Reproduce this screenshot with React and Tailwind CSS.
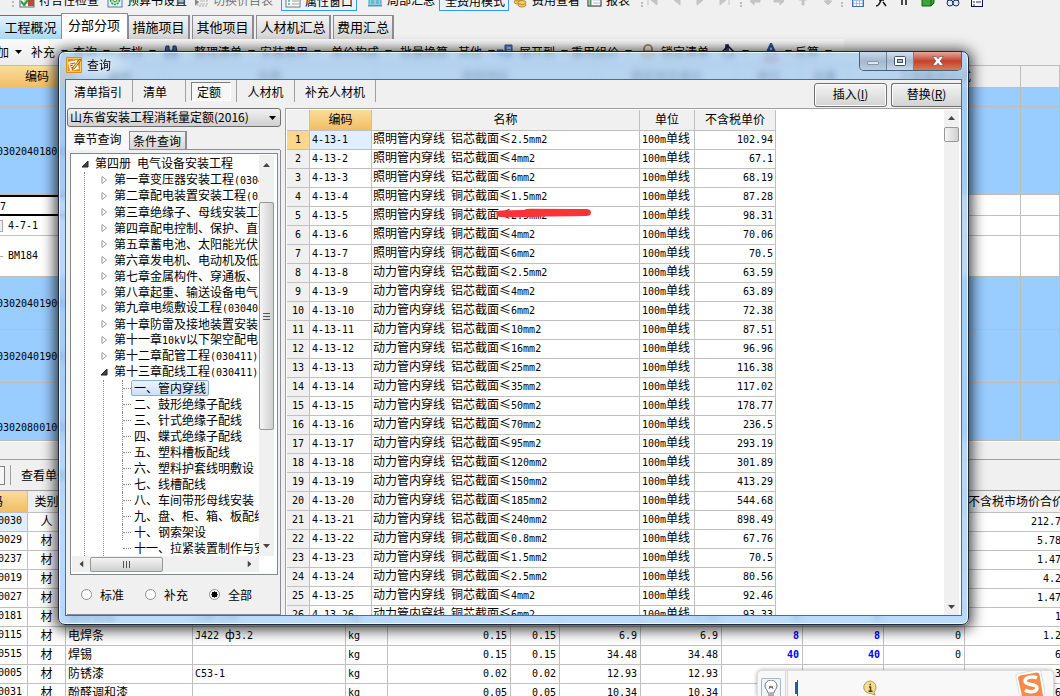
import React from "react";

const sans = "font-['Noto_Sans_CJK_SC',sans-serif]";

/* Latin runs sit on a half-width grid beside the full-width characters. */
function T({ children }) {
  const parts = String(children).split(/([\x20-\x7e]+)/).filter(Boolean);
  return (
    <>
      {parts.map((p, i) =>
        /^[\x20-\x7e]+$/.test(p) ? (
          <span key={i} className="whitespace-pre font-['DejaVu_Sans_Mono',monospace] text-[10px]">{p}</span>
        ) : (
          <React.Fragment key={i}>{p}</React.Fragment>
        )
      )}
    </>
  );
}

function Caret({ className = "" }) {
  return (
    <svg viewBox="0 0 7 4" className={"h-1 w-[7px] shrink-0 " + className} aria-hidden="true">
      <path d="M0 0h7L3.5 4z" fill="currentColor" />
    </svg>
  );
}

function Grip() {
  return <span className="h-3 w-[3px] shrink-0 border-l-2 border-dotted border-[#bdbdbd]" />;
}

/* ---------- top toolbar ---------- */

const GridCheck = () => (
  <svg viewBox="0 0 16 16" className="h-4 w-4" aria-hidden="true">
    <rect x="1" y="1" width="14" height="14" fill="#fff" stroke="#667" />
    <path d="M1 6h14M1 11h14M6 1v14M11 1v14" stroke="#8aa" />
    <rect x="9" y="8" width="6" height="6" fill="#b84a3a" />
    <path d="M2 9l3 4 7-9" fill="none" stroke="#2aa22a" strokeWidth="2" />
  </svg>
);
const Gear = () => (
  <svg viewBox="0 0 16 16" className="h-4 w-4" aria-hidden="true">
    <rect x="1" y="1" width="14" height="14" fill="#e6f0f8" stroke="#4d7fae" />
    <circle cx="8" cy="8" r="4.5" fill="#b9e8b9" stroke="#2e9c4a" strokeWidth="1.5" strokeDasharray="2 1" />
    <circle cx="8" cy="8" r="1.8" fill="#fff" stroke="#2e9c4a" />
  </svg>
);
const SwapGrid = () => (
  <svg viewBox="0 0 16 16" className="h-4 w-4" aria-hidden="true">
    <rect x="5" y="2" width="9" height="12" fill="#eee" stroke="#aaa" strokeDasharray="2 1" />
    <path d="M2 7l4 3-4 4z" fill="#888" />
    <path d="M7 6h5M7 9h5M7 12h5" stroke="#bbb" />
  </svg>
);
const Panel = () => (
  <svg viewBox="0 0 16 16" className="h-4 w-4" aria-hidden="true">
    <rect x="1" y="1" width="14" height="13" fill="#fff" stroke="#777" />
    <path d="M3 5h2M3 8h2M3 11h2" stroke="#4a8" strokeWidth="1.5" />
    <path d="M7 5h7M7 8h7M7 11h7" stroke="#999" />
  </svg>
);
const Chart = () => (
  <svg viewBox="0 0 16 16" className="h-4 w-4" aria-hidden="true">
    <path d="M2 12V6h3v6M6 12V3h4v9M11 12V7h3v5" fill="#8fd0e8" stroke="#3ca0c4" />
    <path d="M1 13.500h14" stroke="#3ca0c4" strokeWidth="2" />
  </svg>
);
const Coins = () => (
  <svg viewBox="0 0 16 16" className="h-4 w-4" aria-hidden="true">
    <g fill="#f2cf6b" stroke="#b78a2c">
      <ellipse cx="6" cy="10" rx="4" ry="2" />
      <ellipse cx="6" cy="7" rx="4" ry="2" />
      <ellipse cx="10" cy="13" rx="4" ry="2" />
      <ellipse cx="10" cy="10.500" rx="4" ry="2" />
    </g>
  </svg>
);
const Sheet = () => (
  <svg viewBox="0 0 16 16" className="h-4 w-4" aria-hidden="true">
    <rect x="2" y="1" width="13" height="13" fill="#fff" stroke="#222" />
    <path d="M4.500 2v12" stroke="#4a9a5a" strokeWidth="2" />
    <path d="M7 5h7M7 8h7M7 11h7" stroke="#abc" />
  </svg>
);

function TopItem({ icon, label, muted, w }) {
  return (
    <button type="button" className={"flex h-[15px] shrink-0 items-center gap-[4px] whitespace-nowrap leading-[14px] " + w + (muted ? " text-[#777]" : "")}>
      {icon}
      {label}
    </button>
  );
}

function Nav({ d, color = "#c4c4c4", w = "w-[37px]" }) {
  return (
    <span className={"flex shrink-0 justify-center " + w}>
      <svg viewBox="0 0 14 14" className="h-[14px] w-[14px] shrink-0" aria-hidden="true">
        <path d={d} fill={color} stroke={color} />
      </svg>
    </span>
  );
}

function TopToolbar() {
  return (
    <div className="flex h-[13px] shrink-0 items-end overflow-hidden pb-[6px] pl-3">
      <span className="w-[7px] shrink-0"><Grip /></span>
      <TopItem icon={<GridCheck />} label="符合性检查" w="w-[88px]" />
      <TopItem icon={<Gear />} label="预算书设置" w="w-[86px]" />
      <TopItem icon={<SwapGrid />} label="切换价目表" muted w="w-[88px]" />
      <span className="-mb-1 flex h-5 w-[76px] shrink-0 items-center border border-[#3399ff] bg-[#eaf3fd] pl-[3px]">
        <TopItem icon={<Panel />} label="属性窗口" w="w-[70px]" />
      </span>
      <span className="w-[10px] shrink-0" />
      <TopItem icon={<Chart />} label="局部汇总" w="w-[72px]" />
      <span className="-mb-1 flex h-5 w-[70px] shrink-0 items-center border border-[#3399ff] bg-[#eaf3fd] pl-[5px]">
        <TopItem label="全费用模式" w="w-[62px]" />
      </span>
      <span className="w-[3px] shrink-0" />
      <TopItem icon={<Coins />} label="费用查看" w="w-[74px]" />
      <TopItem icon={<Sheet />} label="报表" w="w-[55px]" />
      <Grip />
      <Nav d="M2 2v10M5 7l6-5v10z" w="w-[18px]" />
      <Nav d="M4 7l6-5v10z" w="w-[30px]" />
      <Nav d="M10 7L4 2v10z" w="w-[16px]" />
      <Nav d="M9 7L3 2v10zM12 2v10" w="w-[32px]" />
      <Grip />
      <Nav d="M2 8l4-4v3h6v2H6v3z" w="w-[24px]" />
      <Nav d="M12 8L8 4v3H2v2h6v3z" w="w-[24px]" />
      <Nav d="M7 3l4 4H8v5H6V7H3z" w="w-[24px]" />
      <Nav d="M7 12l4-4H8V3H6v5H3z" w="w-[26px]" />
      <Grip />
      <span className="flex shrink-0 items-end gap-[11px] pl-2">
        <svg viewBox="0 0 12 14" className="h-[14px] w-3" aria-hidden="true"><rect x=".5" y=".5" width="11" height="13" fill="#9fc0ea" stroke="#4a6ba6" /><path d="M2 6h8M2 9h8M2 12h8" stroke="#fff" strokeWidth="2" strokeDasharray="2 1" /></svg>
        <svg viewBox="0 0 12 14" className="h-[14px] w-3" aria-hidden="true"><path d="M1 13c3 0 4-3 5-6l2-4M4 7h5M8 9l3 4" stroke="#111" strokeWidth="1.500" fill="none" /></svg>
        <svg viewBox="0 0 12 14" className="h-[14px] w-3" aria-hidden="true"><path d="M4 2v10M8 2v10" stroke="#111" strokeWidth="1.500" /></svg>
        <svg viewBox="0 0 14 14" className="h-[14px] w-[14px]" aria-hidden="true"><path d="M1 5l3-3h9v8l-3 3H1z" fill="#3aa63a" stroke="#145c14" /><path d="M10 5v8" stroke="#145c14" /></svg>
        <svg viewBox="0 0 14 14" className="h-[14px] w-[14px]" aria-hidden="true"><path d="M3 2h3v6H1zM8 2h3l2 6H8z" fill="#2f4a86" /><circle cx="4" cy="10" r="3" fill="#dfe8f8" stroke="#1b2d5c" /><circle cx="10" cy="10" r="3" fill="#dfe8f8" stroke="#1b2d5c" /></svg>
        <svg viewBox="0 0 12 14" className="h-[14px] w-3" aria-hidden="true"><rect x=".5" y=".5" width="11" height="13" fill="#fff" stroke="#114" /><path d="M2 6h2M2 9h2M2 12h2M5 6h5M5 9h5" stroke="#22a" /></svg>
      </span>
    </div>
  );
}

/* ---------- main tabs ---------- */

function MainTabs() {
  const rest = [["措施项目", "w-[62px]"], ["其他项目", "w-[62px]"], ["人材机汇总", "w-[75px]"], ["费用汇总", "w-[61px]"]];
  return (
    <div role="tablist" className="flex h-[26px] shrink-0 items-end gap-[2px] text-[13px]">
      <button type="button" role="tab" className="-mr-[2px] h-6 w-[61px] whitespace-nowrap border-t border-[#3c7fb1] bg-linear-to-b from-[#e3f4fd] to-[#a6d9f5] pb-[2px] text-center">工程概况</button>
      <button type="button" role="tab" aria-selected="true" className="-mr-[2px] h-[26px] w-[67px] whitespace-nowrap border border-b-0 border-[#8c8c94] bg-white pb-1 pr-px text-center">分部分项</button>
      {rest.map(([label, w]) => (
        <button key={label} type="button" role="tab" className={"h-6 whitespace-nowrap border border-b-0 border-r-2 border-[#8c8c94] bg-linear-to-b from-[#f4f4f4] to-[#d4d4d4] pb-[2px] text-center " + w}>{label}</button>
      ))}
    </div>
  );
}

/* ---------- action toolbar ---------- */

function ActionBar() {
  const Item = ({ label, w, arrow = true, icon }) => (
    <button type="button" className={"flex shrink-0 items-center gap-[6px] whitespace-nowrap " + w}>
      {icon}
      {label}
      {arrow && <Caret />}
    </button>
  );
  return (
    <div className="flex h-[27px] shrink-0 items-center border-b border-[#bcbcbc]">
      <div className="flex h-full items-center bg-linear-to-b from-[#fafafa] to-[#ececec] pr-3">
        <span className="w-[31px] shrink-0 overflow-hidden"><span className="-ml-[15px] flex"><Item label="增加" w="w-[46px]" /></span></span>
        <Item label="补充" w="w-[42px]" />
        <Item label="查询" w="w-[46px]" />
        <Item label="存档" w="w-[45px]" />
        <span className="w-[30px] shrink-0">
          <svg viewBox="0 0 14 14" className="h-[14px] w-[14px]" aria-hidden="true"><path d="M2 1h3v3l1 2h2l1-2V1h3l1 6v6H9V8H5v5H1V7z" fill="#4667a8" stroke="#1f3768" /></svg>
        </span>
        <Item label="整理清单" w="w-[66px]" />
        <Item label="安装费用" w="w-[71px]" />
        <Item label="单价构成" w="w-[69px]" />
        <Item label="批量换算" w="w-[58px]" arrow={false} />
        <Item label="其他" w="w-[39px]" />
        <Item label="展开到" w="w-[74px]" icon={<svg viewBox="0 0 16 16" className="h-4 w-4 shrink-0" aria-hidden="true"><path d="M0 6h6v5H0zM8 1h7v12H8z" fill="#5a86cc" stroke="#2d4e91" /><path d="M10 4h4M10 7h4" stroke="#fff" /></svg>} />
        <Item label="重用组价" w="w-[70px]" />
        <Item label="锁定清单" w="w-[79px]" arrow={false} icon={<svg viewBox="0 0 14 16" className="h-4 w-[14px]" aria-hidden="true"><path d="M3 8V5a4 4 0 018 0v3" fill="none" stroke="#a09070" strokeWidth="2" /><rect x="1" y="7" width="12" height="8" rx="2" fill="#d9bf78" stroke="#a08a50" /></svg>} />
        <Item label="" w="w-[43px]" icon={<svg viewBox="0 0 16 16" className="h-4 w-4" aria-hidden="true"><path d="M2 8l6-6 6 6-6 6z" fill="#fff" stroke="#114" strokeWidth="1.500" /><path d="M6 8V1h2v6M13 8v6" stroke="#114" fill="none" strokeWidth="1.500" /></svg>} />
        <Item label="" w="w-[32px]" icon={<svg viewBox="0 0 16 18" className="h-[18px] w-4" aria-hidden="true"><path d="M3 12L8 1l5 11M5 8h6" stroke="#27549b" strokeWidth="2.500" fill="none" /><path d="M0 15h16v3H0z" fill="#e01010" /></svg>} />
        <Item label="反算" w="w-[37px]" />
      </div>
    </div>
  );
}

/* ---------- bill grid behind the dialog ---------- */

function BillGrid() {
  const heads = [["类别", "w-[90px]"], ["名称", "w-[210px]"], ["项目特征", "w-[221px]"], ["锁定综合单价", "w-[142px]"], ["单位", "w-[62px]"], ["含量", "w-[50px]"], ["工程量表达式", "w-[171px]"], ["", "w-auto"]];
  const rows = [
    ["", "h-[19px]", "blue"],
    ["030204018010", "h-[88px]", "blue"],
    ["7", "h-[21px]", "sel"],
    ["4-7-1", "h-[20px]", "sub"],
    ["BM184", "h-[41px]", "leaf"],
    ["030204019001", "h-[53px]", "blue"],
    ["030204019002", "h-[53px]", "blue"],
    ["030208001001", "h-[58px]", "low"],
  ];
  return (
    <table className="w-full table-fixed border-separate border-spacing-0">
      <thead>
        <tr className="h-[22px]">
          <th className="w-[75px] border-r border-[#c0c0c0] bg-linear-to-b from-[#fbdc9c] to-[#f1bd62] p-0 pb-[2px] font-normal leading-4">编码</th>
          {heads.map(([h, w], i) => (
            <th key={i} className={"border-b border-r border-[#c0c0c0] p-0 pb-[2px] font-normal leading-4 " + w}>{h}</th>
          ))}
        </tr>
      </thead>
      <tbody>
        {rows.map(([code, h, kind], i) => {
          const blue = kind === "blue" || kind === "low";
          const bg = blue ? "bg-[#99ccff] border-[#c4bcb4] " : "bg-white border-[#c0c0c0] ";
          return (
            <tr key={i} className={h}>
              <td className={"overflow-hidden whitespace-nowrap p-0 leading-[14px] " + bg + (kind === "sel" ? "border-y-2 border-black" : "border-b") + (kind === "low" ? " align-bottom" : "")}>
                {kind === "sub" ? (
                  <span className="flex items-center gap-[5px]"><span className="h-3 w-[3px] border border-l-0 border-[#aaa] bg-[#eee]" /><T>{code}</T></span>
                ) : kind === "leaf" ? (
                  <span className="flex items-center gap-[5px]"><span className="w-[3px] border-t border-[#aaa]" /><T>{code}</T></span>
                ) : kind === "sel" ? (
                  <T>{code}</T>
                ) : (
                  <span className={"-ml-[3px] block " + (kind === "low" ? "pb-[5px]" : "")}><T>{code}</T></span>
                )}
              </td>
              {heads.map((_, j) => (
                <td key={j} className={"border-b border-r p-0 " + bg} />
              ))}
            </tr>
          );
        })}
      </tbody>
    </table>
  );
}

/* ---------- resource grid at the bottom ---------- */

const resources = [
  ["0030", "人", "", "", "", "", "", "", "", "", "", "", "212.7 "],
  ["0029", "材", "", "", "", "", "", "", "", "", "", "", "5.78 "],
  ["0237", "材", "", "", "", "", "", "", "", "", "", "", "1.47 "],
  ["0019", "材", "", "", "", "", "", "", "", "", "", "", "4.2 "],
  ["0027", "材", "", "", "", "", "", "", "", "", "", "", "1.47 "],
  ["0181", "材", "镀锌铁丝", "13#~17#", "kg", "", "", "", "5.55", "8", "8", "", "1 "],
  ["0115", "材", "电焊条", "J422 ф3.2", "kg", "0.15", "0.15", "6.9", "6.9", "8", "8", "0", "1.2 "],
  ["0515", "材", "焊锡", "", "kg", "0.15", "0.15", "34.48", "34.48", "40", "40", "0", "6 "],
  ["0005", "材", "防锈漆", "C53-1", "kg", "0.02", "0.02", "12.93", "12.93", "", "", "", "3 "],
  ["0031", "材", "酚醛调和漆", "", "kg", "0.05", "0.05", "10.34", "10.34", "", "", "", "6 "],
];
const resCols = ["w-[28px]", "w-[38px]", "w-[127px]", "w-[153px]", "w-[42px]", "w-[123px]", "w-[49px]", "w-[81px]", "w-[81px]", "w-[81px]", "w-[81px]", "w-[81px]", "w-[103px]"];

function ResourceGrid() {
  return (
    <table className="w-[1068px] table-fixed border-separate border-spacing-0 bg-white">
      <thead>
        <tr className="h-[22px]">
          {resCols.map((w, i) => (
            <th key={i} className={"overflow-hidden whitespace-nowrap border-b border-r border-[#c0c0c0] p-0 pb-[2px] font-normal leading-4 " + w + (i === 0 ? " bg-linear-to-b from-[#fbdc9c] to-[#f1bd62]" : " bg-[#f0f0f0]")}>
              {i === 0 ? <span className="flex justify-end pr-[24px]">编码</span> : i === 1 ? "类别" : i === 12 ? "不含税市场价合价" : ""}
            </th>
          ))}
        </tr>
      </thead>
      <tbody>
        {resources.map((r, i) => (
          <tr key={i} className="h-[19px]">
            {r.map((v, j) => (
              <td
                key={j}
                className={
                  "overflow-hidden whitespace-nowrap border-b border-r border-[#c0c0c0] p-0 pb-[2px] leading-[14px] " +
                  (j === 0 ? "" : j === 1 ? "text-center" : j < 5 ? "pl-[2px]" : j === 12 ? "text-right" : "pr-[3px] text-right") +
                  (j === 9 || j === 10 ? " font-bold text-[#0000ff]" : "") +
                  (i === 0 && j === 0 ? " bg-[#dfefff]" : "")
                }
              >
                {j === 0 ? <span className="flex justify-end pr-[5px]"><T>{v}</T></span> : <T>{v}</T>}
              </td>
            ))}
          </tr>
        ))}
      </tbody>
    </table>
  );
}

/* ---------- query dialog ---------- */

function TitleBar() {
  return (
    <div className="flex h-[27px] shrink-0 items-center">
      <div className="flex h-full items-center gap-[5px] rounded-full bg-radial from-white/60 to-transparent to-70% pb-[2px] pl-[7px] pr-6">
        <svg viewBox="0 0 16 16" className="h-4 w-4" aria-hidden="true">
          <rect width="16" height="16" rx="1" fill="#e98a12" />
          <rect x="1.500" y="1.500" width="13" height="13" fill="none" stroke="#ffc860" />
          <path d="M2 5l9-2 2 9-9 2z" fill="#fffbe8" />
          <path d="M4 7l5-1M4 9l3-1M5 11l3-1" stroke="#b05a10" />
          <path d="M14 2L7 10l-1 3 3-2 6-8z" fill="#f7d774" stroke="#8a4a08" strokeWidth=".8" />
        </svg>
        <span className="leading-5">查询</span>
      </div>
      <div className="ml-auto mr-[6px] flex h-[19px] self-start overflow-hidden rounded-b-[5px] border border-t-0 border-[#4c5f78]">
        <button type="button" aria-label="最小化" className="flex w-[27px] items-center justify-center border-r border-[#6d8199] bg-linear-to-b from-[#c9d9e9] via-[#a3b9d0] to-[#b7cde2]">
          <span className="mt-1 h-1 w-3 rounded-[1px] border border-[#8795a6] bg-[#dfe6ee]" />
        </button>
        <button type="button" aria-label="最大化" className="flex w-[27px] items-center justify-center border-r border-[#6d8199] bg-linear-to-b from-[#d5e2ef] via-[#a3b9d0] to-[#c4d8ea]">
          <svg viewBox="0 0 12 10" className="h-[10px] w-3" aria-hidden="true"><rect x=".5" y=".5" width="11" height="9" rx="1" fill="#fff" stroke="#43506a" /><rect x="3.500" y="3.500" width="5" height="3" fill="#a8bcd4" stroke="#43506a" /></svg>
        </button>
        <button type="button" aria-label="关闭" className="flex w-[47px] items-center justify-center bg-linear-to-b from-[#e3a79c] via-[#c4402a] to-[#d67a5c]">
          <svg viewBox="0 0 12 10" className="h-[10px] w-3" aria-hidden="true"><path d="M.5.5h3.700L6 2.800 7.800.5h3.700L8.200 5l3.300 4.500H7.800L6 7.200 4.200 9.500H.5L3.800 5z" fill="#fff" stroke="#5a4450" strokeWidth=".6" /></svg>
        </button>
      </div>
    </div>
  );
}

function DialogTabs() {
  const tab = "border-r border-[#a0a0a0] h-[22px] text-center leading-[19px] ";
  return (
    <div className="flex h-[28px] shrink-0 items-center pl-px">
      <div role="tablist" className="flex items-center self-start">
        <button type="button" role="tab" className={tab + "w-[66px] pr-[3px]"}>清单指引</button>
        <button type="button" role="tab" className={tab + "mr-[5px] w-[53px] pr-2"}>清单</button>
        <button type="button" role="tab" aria-selected="true" className="h-[19px] w-10 border border-[#808080] border-b-white border-r-white bg-[#f7f7f7] pr-1 text-center leading-[17px]">定额</button>
        <span className="ml-[5px] h-[22px] border-l border-[#a0a0a0]" />
        <button type="button" role="tab" className={tab + "w-[58px]"}>人材机</button>
        <button type="button" role="tab" className={tab + "w-[81px]"}>补充人材机</button>
      </div>
      <div className="ml-auto flex gap-[4px] pt-[2px]">
        <button type="button" className="h-6 w-[73px] rounded-[3px] border border-[#707070] bg-linear-to-b from-[#f4f4f4] to-[#d3d3d3] pb-[2px] text-center leading-[18px] shadow-[inset_0_0_0_1px_#fcfcfc]">插入(<u>I</u>)</button>
        <button type="button" className="h-6 w-[70px] rounded-l-[3px] border border-r-0 border-[#707070] bg-linear-to-b from-[#f4f4f4] to-[#d3d3d3] pb-[2px] text-center leading-[18px] shadow-[inset_1px_1px_0_0_#fcfcfc]">替换(<u>R</u>)</button>
      </div>
    </div>
  );
}

const chapters = [
  "第一章变压器安装工程(030401)",
  "第二章配电装置安装工程(030402)",
  "第三章绝缘子、母线安装工程",
  "第四章配电控制、保护、直流",
  "第五章蓄电池、太阳能光伏",
  "第六章发电机、电动机及低压",
  "第七章金属构件、穿通板、",
  "第八章起重、输送设备电气",
  "第九章电缆敷设工程(030408)",
  "第十章防雷及接地装置安装",
  "第十一章10kV以下架空配电",
  "第十二章配管工程(030411)",
];
const sections = ["一、管内穿线", "二、鼓形绝缘子配线", "三、针式绝缘子配线", "四、蝶式绝缘子配线", "五、塑料槽板配线", "六、塑料护套线明敷设", "七、线槽配线", "八、车间带形母线安装", "九、盘、柜、箱、板配线", "十、钢索架设", "十一、拉紧装置制作与安装"];

const Open = () => (
  <svg viewBox="0 0 8 8" className="h-2 w-2 shrink-0" aria-hidden="true"><path d="M7 1v6H1z" fill="#444" stroke="#222" /></svg>
);
const Closed = () => (
  <svg viewBox="0 0 8 10" className="h-[10px] w-2 shrink-0" aria-hidden="true"><path d="M2 1.500v7L6.500 5z" fill="#fff" stroke="#999" /></svg>
);
const dot = "border-dotted border-[#888]";

function Tree() {
  return (
    <ul className="min-w-0 flex-1 overflow-hidden whitespace-nowrap pt-px">
      <li>
        <div className="flex h-4 items-center gap-[6px] pl-[9px] leading-4"><Open /><span><T>第四册 电气设备安装工程</T></span></div>
        <ul className={"ml-3 border-l " + dot}>
          {chapters.map((c) => (
            <li key={c} className="flex h-4 items-center gap-[6px] pl-[15px] leading-4"><Closed /><span><T>{c}</T></span></li>
          ))}
          <li>
            <div className="flex h-4 items-center gap-[6px] pl-[15px] leading-4"><Open /><span><T>第十三章配线工程(030411)</T></span></div>
            <ul className={"ml-[18px] border-l pl-[18px] " + dot}>
              {sections.map((s, i) => (
                <li key={s} className={"flex h-4 items-center leading-4 " + (i < 10 ? "border-l " + dot : "pl-px")}>
                  <span className={"w-2 shrink-0 border-t " + dot} />
                  <span className={"shrink-0 " + (i === 0 ? "rounded-[2px] border border-[#84acdd] bg-linear-to-b from-[#ebf4fd] to-[#c9e0fb] px-[2px] leading-[14px]" : "pl-[3px]")}>{s}</span>
                </li>
              ))}
            </ul>
          </li>
        </ul>
      </li>
    </ul>
  );
}

function ScrollUp() {
  return <Caret className="rotate-180 text-[#444]" />;
}

function LeftPane() {
  const radio = "m-0 h-[11px] w-[11px] appearance-none rounded-full border border-[#8e8f8f] bg-white checked:bg-radial checked:from-black checked:from-45% checked:to-white checked:to-50%";
  return (
    <div className="flex w-[215px] shrink-0 flex-col pl-px">
      <label className="relative flex h-[19px] shrink-0">
        <select aria-label="定额库" className="h-[19px] w-full appearance-none rounded-[3px] border border-[#707070] bg-linear-to-b from-[#f2f2f2] to-[#cfcfcf] pb-[2px] pl-[2px] leading-[15px]">
          <option>山东省安装工程消耗量定额(2016)</option>
        </select>
        <Caret className="absolute right-[5px] top-2" />
      </label>
      <div role="tablist" className="flex h-[23px] shrink-0 items-end pt-px">
        <button type="button" role="tab" aria-selected="true" className="h-full w-[62px] bg-[#f8f8f8] pr-px text-center leading-5">章节查询</button>
        <button type="button" role="tab" className="h-[19px] w-[58px] border border-r-2 border-[#8c8c94] bg-linear-to-b from-[#f2f2f2] to-[#d6d6d6] pr-px text-center leading-[17px]">条件查询</button>
        <span className="w-[93px] self-end border-b border-[#8c8c94]" />
      </div>
      <div className="flex min-h-0 flex-1 flex-col border-b border-r border-[#8c8c94] bg-[#f0f0f0] pl-[3px] pr-[2px] pt-[3px]">
        <div className="flex min-h-0 flex-1 flex-col border border-[#828790] bg-white p-px">
          <div className="flex min-h-0 flex-1">
            <Tree />
            <div className="mr-[2px] flex w-[15px] shrink-0 flex-col items-center bg-[#f0f0f0] py-2">
              <ScrollUp />
              <div className="mt-[35px] flex h-[228px] w-[15px] shrink-0 flex-col items-center justify-center gap-[2px] rounded-[2px] border border-[#979797] bg-linear-to-r from-[#f5f5f5] to-[#cfcfcf]">
                <span className="w-[7px] border-t border-[#555]" /><span className="w-[7px] border-t border-[#555]" /><span className="w-[7px] border-t border-[#555]" />
              </div>
              <Caret className="mt-auto text-[#444]" />
            </div>
          </div>
          <div className="mb-px mr-[17px] flex h-[16px] shrink-0 items-center bg-[#f0f0f0] px-[6px]">
            <Caret className="rotate-90 text-[#444]" />
            <div className="ml-[5px] flex h-[15px] w-[73px] items-center justify-center gap-[2px] rounded-[2px] border border-[#979797] bg-linear-to-b from-[#f5f5f5] to-[#cfcfcf]">
              <span className="h-[7px] border-l border-[#555]" /><span className="h-[7px] border-l border-[#555]" /><span className="h-[7px] border-l border-[#555]" />
            </div>
            <Caret className="ml-auto -rotate-90 text-[#444]" />
          </div>
        </div>
        <div className="flex h-[39px] shrink-0 items-center pl-[11px]">
          {["标准", "补充", "全部"].map((l) => (
            <label key={l} className="flex w-16 items-center gap-2">
              <input type="radio" name="scope" defaultChecked={l === "全部"} className={radio} />
              {l}
            </label>
          ))}
        </div>
      </div>
    </div>
  );
}

const quotas = [
  ["照明", "铝", "2.5", "102.94"], ["照明", "铝", "4", "67.1"], ["照明", "铝", "6", "68.19"],
  ["照明", "铜", "1.5", "87.28"], ["照明", "铜", "2.5", "98.31"], ["照明", "铜", "4", "70.06"], ["照明", "铜", "6", "70.5"],
  ["动力", "铝", "2.5", "63.59"], ["动力", "铝", "4", "63.89"], ["动力", "铝", "6", "72.38"], ["动力", "铝", "10", "87.51"],
  ["动力", "铝", "16", "96.96"], ["动力", "铝", "25", "116.38"], ["动力", "铝", "35", "117.02"], ["动力", "铝", "50", "178.77"],
  ["动力", "铝", "70", "236.5"], ["动力", "铝", "95", "293.19"], ["动力", "铝", "120", "301.89"], ["动力", "铝", "150", "413.29"],
  ["动力", "铝", "185", "544.68"], ["动力", "铝", "240", "898.49"], ["动力", "铜", "0.8", "67.76"], ["动力", "铜", "1.5", "70.5"],
  ["动力", "铜", "2.5", "80.56"], ["动力", "铜", "4", "92.46"], ["动力", "铜", "6", "93.33"],
];

function QuotaTable() {
  const cell = "whitespace-nowrap border-b border-r border-[#c0c0c0] p-0 pb-[2px] font-normal leading-[14px] ";
  return (
    <div className="ml-1 flex min-w-0 flex-1 border-l border-t border-[#a0a0a0] bg-white pl-px pt-px">
      <div className="relative min-w-0 flex-1 overflow-hidden">
        <table className="w-[489px] table-fixed border-separate border-spacing-0">
          <thead>
            <tr className="h-[21px] bg-[#f0f0f0]">
              <th className={cell + "w-[23px]"} />
              <th className={cell + "w-[62px] bg-linear-to-b from-[#fbdc9c] to-[#f1bd62]"}>编码</th>
              <th className={cell + "w-[268px]"}>名称</th>
              <th className={cell + "w-[55px]"}>单位</th>
              <th className={cell + "w-[81px]"}>不含税单价</th>
            </tr>
          </thead>
          <tbody>
            {quotas.map(([use, core, size, price], i) => (
              <tr key={i} className="h-[19px]">
                <td className={cell + "text-center " + (i === 0 ? "bg-[#ffd78c]" : "bg-[#f0f0f0]")}><T>{i + 1}</T></td>
                <td className={cell + "pl-[2px] " + (i === 0 ? "bg-[#dfefff]" : "")}><T>{`4-13-${i + 1}`}</T></td>
                <td className={cell + "pl-[1px]"}><T>{`${use}管内穿线 ${core}芯截面≤${size}mm2`}</T></td>
                <td className={cell + "pl-[2px]"}><T>100m单线</T></td>
                <td className={cell + "pr-[2px] text-right"}><T>{price}</T></td>
              </tr>
            ))}
          </tbody>
        </table>
        <svg viewBox="0 0 96 10" className="absolute left-[209px] top-[98px] h-[10px] w-24" aria-hidden="true">
          <path d="M4 2.500L28 2Q30 .8 34 .8L90 1Q95 1 95 4.500Q95 8 90 8L50 8.500Q30 9.500 4 9Q.5 8.500.5 5.500Q.5 3 4 2.500z" fill="#fb3336" />
        </svg>
      </div>
      <div className="mr-[2px] flex w-[15px] shrink-0 flex-col items-center bg-[#f0f0f0] py-[6px]">
        <ScrollUp />
        <div className="mt-[7px] h-[15px] w-[15px] rounded-[2px] border border-[#979797] bg-linear-to-r from-[#f5f5f5] to-[#cfcfcf]" />
        <Caret className="mt-auto text-[#444]" />
      </div>
    </div>
  );
}

function QueryDialog() {
  return (
    <section
      role="dialog"
      aria-label="查询"
      className="absolute bottom-[71px] left-[58px] right-[91px] top-[51px] flex flex-col rounded-[7px] border border-[#1c2c3e] bg-linear-to-b from-[#a3caf0]/75 to-[#a9d2fb]/80 shadow-[0_2px_14px_3px_rgba(0,0,0,0.75),inset_0_0_0_1px_rgba(255,255,255,0.75)] backdrop-blur-[3px]"
    >
      <TitleBar />
      <div className="mx-[6px] mb-2 flex min-h-0 flex-1 flex-col border border-[#566a80] bg-[#f0f0f0]">
        <DialogTabs />
        <div className="flex min-h-0 flex-1">
          <LeftPane />
          <QuotaTable />
        </div>
      </div>
    </section>
  );
}

/* ---------- input method bar ---------- */

function InputBar() {
  return (
    <div className="absolute bottom-0 right-[6px] flex h-[26px] w-[297px] items-end rounded-t-[5px] border border-b-0 border-[#ddd] bg-[#f8f8f8] shadow-[0_0_4px_rgba(0,0,0,0.35)]">
      <button type="button" aria-label="提示" className="ml-[3px] flex h-[18px] w-5 justify-center rounded-t-[2px] border border-b-0 border-[#9fb8cc] bg-[#eef4f9] pt-px">
        <svg viewBox="0 0 14 18" className="h-[18px] w-[14px]" aria-hidden="true"><path d="M4 13c0-3-3-4-3-7a6 6 0 0112 0c0 3-3 4-3 7z" fill="#fff" stroke="#777" /><path d="M5 9l1-3 1 2 1-2 1 3M4 15h6M5 17h4" stroke="#666" fill="none" /></svg>
      </button>
      <span className="ml-1 h-full w-[3px] border-x border-[#f9c9c9]" />
      <span className="ml-[7px] flex h-[16px] items-start">
        <span className="mt-[2px] h-3 w-[2px] bg-[#1f60b0]" />
        <span className="h-full w-px bg-[#ff0000]" />
      </span>
      <svg viewBox="0 0 16 16" className="ml-[64px] h-4 w-4" aria-hidden="true"><path d="M8 1a6.500 6 0 016 6 6 6 0 01-2 5l1 3-4-1.500A6.500 6 0 118 1z" fill="#f3dd92" stroke="#b89a4a" /><path d="M7 7h1.500v4M6.500 11.300h4M7.500 4.500h1.500" stroke="#5a4210" strokeWidth="1.500" fill="none" /></svg>
      <svg viewBox="0 0 30 26" className="ml-auto mr-2 h-[26px] w-[30px]" aria-hidden="true">
        <path d="M1 7q-1-3 2-3.500L22 0q3-.5 4 2l4 20q0 4-3 4H7q-2 0-3-3z" fill="#fff" stroke="#ddd" />
        <path d="M3 8q0-2 2-2.500L22 2.500q2 0 2.500 2L28 26H7z" fill="#f58a4c" />
        <path d="M22 8c-4-2-12-1-12 3 0 5 12 2 12 7 0 4-8 5-12 2" fill="none" stroke="#fff" strokeWidth="3.500" />
      </svg>
    </div>
  );
}

export default function App() {
  return (
    <div className={"relative flex h-screen flex-col overflow-hidden bg-[#f0f0f0] text-[12px] leading-4 text-black " + sans}>
      <TopToolbar />
      <MainTabs />
      <ActionBar />
      <div className="shrink-0 border-b border-white"><BillGrid /></div>
      <div className="h-[18px] shrink-0 border-b border-[#a0a0a0]" />
      <div className="flex h-[31px] shrink-0 items-center gap-[10px] border-b border-[#a0a0a0]">
        <span className="h-[19px] w-[5px] border border-l-0 border-[#808080] bg-[#f7f7f7]" />
        <span className="-ml-[5px] h-5 border-l border-[#a0a0a0]" />
        <span>查看单价构成</span>
      </div>
      <div className="min-h-0 flex-1 overflow-hidden"><ResourceGrid /></div>
      <QueryDialog />
      <InputBar />
    </div>
  );
}
